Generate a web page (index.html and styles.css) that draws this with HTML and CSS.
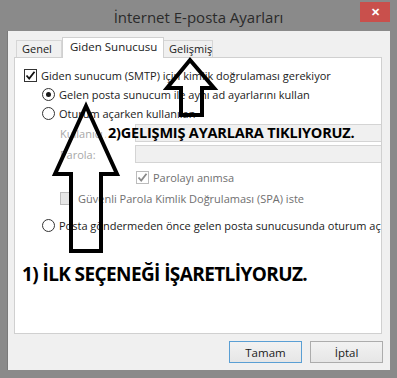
FILE: index.html
```html
<!DOCTYPE html>
<html lang="tr">
<head>
    <meta charset="UTF-8">
    <title>İnternet E-posta Ayarları</title>
    <link rel="stylesheet" href="styles.css">
</head>
<body>
<div class="window">
    <div class="titlebar">
        <span class="title">İnternet E-posta Ayarları</span>
        <span class="close">&#x2715;</span>
    </div>

    <div class="client">
        <div class="tabs">
            <div class="tab first">Genel</div>
            <div class="tab active">Giden Sunucusu</div>
            <div class="tab">Gelişmiş</div>
        </div>

        <div class="panel">
            <div class="row">
                <span class="check">
                    <svg width="11" height="11" viewBox="0 0 11 11"><path d="M1.5 5.5 L4.2 8.5 L9.5 1.8" fill="none" stroke="#111" stroke-width="1.8"/></svg>
                </span>
                Giden sunucum (SMTP) için kimlik doğrulaması gerekiyor
            </div>
            <div class="row sub"><span class="radio on"></span>Gelen posta sunucum ile aynı ad ayarlarını kullan</div>
            <div class="row sub"><span class="radio"></span>Oturum açarken kullanılan</div>

            <div class="row field first-field">
                <span class="label"><span class="clip">Kullanıcı Adı:</span></span>
                <span class="input"></span>
            </div>
            <div class="row field second-field">
                <span class="label">Parola:</span>
                <span class="input"></span>
            </div>

            <div class="row remember dim">
                <span class="check dis">
                    <svg width="11" height="11" viewBox="0 0 11 11"><path d="M1.5 5.5 L4.2 8.5 L9.5 1.8" fill="none" stroke="#8a8a8a" stroke-width="1.8"/></svg>
                </span>
                Parolayı anımsa
            </div>
            <div class="row spa dim"><span class="check dis filled"></span>Güvenli Parola Kimlik Doğrulaması (SPA) iste</div>

            <div class="row sub last"><span class="radio"></span>Posta göndermeden önce gelen posta sunucusunda oturum aç</div>

            <div class="note1">1) İLK SEÇENEĞİ İŞARETLİYORUZ.</div>
        </div>

        <div class="buttons">
            <button class="btn default">Tamam</button>
            <button class="btn">İptal</button>
        </div>
    </div>

    <div class="note2">2)GELIŞMIŞ AYARLARA TIKLIYORUZ.</div>

    <svg class="arrows" width="397" height="378" viewBox="0 0 397 378">
        <polygon points="86,106 117,174 101,174 101,251 71,251 71,174 55,174" />
        <polygon points="190,60 214,88 202,88 202,115 181,115 181,88 167,88" />
    </svg>
</div>
</body>
</html>
```

FILE: styles.css
```css
body {
    margin: 0;
    background-color: #8a8a8a;
    font-family: "Open Sans", "Noto Sans", sans-serif;
    font-size: 11px;
    color: #1a1a1a;
}

.window {
    position: relative;
    width: 397px;
    height: 378px;
    overflow: hidden;
}

.titlebar {
    height: 31px;
    display: flex;
    justify-content: center;
    align-items: center;
}

.title {
    font-size: 15px;
    color: #2a2a2a;
    margin-top: 2px;
}

.close {
    position: absolute;
    top: 2px;
    left: 360px;
    width: 30px;
    height: 20px;
    background-color: #c9504c;
    color: #fff;
    font-size: 11px;
    font-weight: bold;
    text-align: center;
    line-height: 20px;
}

.client {
    margin-left: 8px;
    width: 382px;
    height: 339px;
    background-color: #f0f0f0;
    box-shadow: -1px 0 0 #7a7a7a;
    overflow: hidden;
}

.tabs {
    display: flex;
    align-items: flex-end;
    height: 19px;
    margin: 7px 0 0 8px;
    position: relative;
    z-index: 1;
}

.tab {
    height: 16px;
    line-height: 16px;
    padding: 0 5px;
    border: 1px solid #d6d6d6;
    border-bottom: none;
    background-color: #f0f0f0;
    white-space: nowrap;
}

.tab.first {
    width: 34px;
}

.tab.active {
    height: 20px;
    line-height: 18px;
    width: 88px;
    background-color: #fff;
    border-color: #d0d0d0;
    margin-bottom: -1px;
    padding-left: 7px;
    font-size: 11.5px;
}

.tab:last-child {
    width: 38px;
    border-left: none;
}

.panel {
    margin-left: 6px;
    width: 366px;
    height: 267px;
    border: 1px solid #d0d0d0;
    background-color: #fff;
    overflow: hidden;
    padding-top: 8px;
}

.row {
    height: 19px;
    display: flex;
    align-items: center;
    white-space: nowrap;
    padding-left: 9px;
}

.row.sub {
    padding-left: 27px;
}

.check {
    width: 11px;
    height: 11px;
    border: 1px solid #333;
    background-color: #fff;
    margin-right: 4px;
    display: flex;
    flex-shrink: 0;
}

.check.dis {
    border-color: #bcbcbc;
}

.check.filled {
    background-color: #e6e6e6;
}

.radio {
    width: 11px;
    height: 11px;
    border: 1px solid #333;
    border-radius: 50%;
    margin-right: 4px;
    position: relative;
    flex-shrink: 0;
}

.radio.on::after {
    content: "";
    position: absolute;
    left: 3px;
    top: 3px;
    width: 5px;
    height: 5px;
    border-radius: 50%;
    background-color: #1a1a1a;
}

.field {
    padding-left: 45px;
}

.first-field {
    height: 18px;
    margin-top: 1px;
}

.second-field {
    margin-top: 3px;
    height: 18px;
}

.label {
    width: 75px;
    flex-shrink: 0;
    color: #a8a8a8;
}

.clip {
    display: block;
    width: 46px;
    overflow: hidden;
}

.input {
    flex: 1;
    height: 16px;
    border: 1px solid #d4d4d4;
    background-color: #f0f0f0;
    margin-right: -3px;
}

.remember {
    margin-top: 5px;
    padding-left: 121px;
}

.dim {
    color: #6f6f6f;
}

.spa {
    margin-top: 2px;
    padding-left: 45px;
}

.spa .check {
    margin-right: 5px;
}

.row.last {
    margin-top: 8px;
}

.note1 {
    margin: 26px 0 0 7px;
    font-size: 19px;
    font-weight: bold;
    color: #000;
    letter-spacing: -0.6px;
    white-space: nowrap;
}

.buttons {
    display: flex;
    justify-content: flex-end;
    gap: 8px;
    margin: 7px 7px 0 0;
}

.btn {
    width: 73px;
    height: 22px;
    border: 1px solid #acacac;
    background: linear-gradient(#f2f2f2, #e6e6e6);
    font-family: "Open Sans", "Noto Sans", sans-serif;
    font-size: 11.5px;
    color: #1a1a1a;
    padding: 0;
}

.btn.default {
    border-color: #5a9fd4;
}

.note2 {
    position: absolute;
    left: 108px;
    top: 123px;
    font-size: 14.5px;
    font-weight: bold;
    color: #000;
    letter-spacing: -0.2px;
    white-space: nowrap;
}

.arrows {
    position: absolute;
    left: 0;
    top: 0;
    pointer-events: none;
}

.arrows polygon {
    fill: none;
    stroke: #000;
    stroke-width: 4;
    stroke-linejoin: miter;
}
```
